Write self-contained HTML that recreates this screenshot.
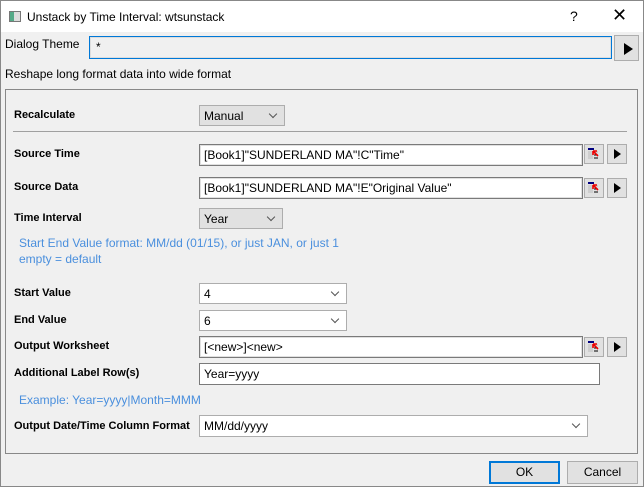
<!DOCTYPE html><html><head><meta charset="utf-8"><style>
*{box-sizing:border-box}
body{margin:0;width:644px;height:487px;background:#f0f0f0;font-family:"Liberation Sans",sans-serif;font-size:12px;color:#000;position:relative;overflow:hidden;border:1px solid #888}
.a{position:absolute;white-space:nowrap}
.b{font-weight:bold;font-size:11px}
.in{position:absolute;background:#fff;border:1px solid #7a7a7a;box-shadow:inset 0 0 0 1px #e0e0e0;padding:3px 4px;font-size:12px}
.cb{position:absolute;background:#fff;border:1px solid #adadad;padding:3px 4px;font-size:12px}
.cb.g{background:#e1e1e1}
.cb:after{content:"";position:absolute;right:8px;top:5px;width:5px;height:5px;border-right:1px solid #555;border-bottom:1px solid #555;transform:rotate(45deg)}
.cb.n:after{display:none}
.btn{position:absolute;background:#e1e1e1;border:1px solid #adadad}
.tri{position:absolute;left:7px;top:5px;width:0;height:0;border-left:7px solid #000;border-top:5px solid transparent;border-bottom:5px solid transparent}
.blue{color:#4a8fdd}
</style></head><body>
<div class="a" style="left:0;top:0;width:642px;height:31px;background:#fff"></div>
<div class="a" style="left:8px;top:10px;width:12px;height:11px;border:1px solid #777;background:linear-gradient(90deg,#5a8 0 40%,#ddd 40%)"></div>
<div class="a" style="left:26px;top:9px;font-size:12px">Unstack by Time Interval: wtsunstack</div>
<div class="a" style="left:569px;top:7px;font-size:14px">?</div>
<div class="a" style="left:611px;top:4px;font-size:18px;font-weight:300">✕</div>
<div class="a" style="left:4px;top:36px">Dialog Theme</div>
<div class="a" style="left:88px;top:35px;width:523px;height:23px;border:1px solid #0078d7;background:#f0f0f0;box-shadow:inset 0 0 0 1px #ddd;padding:3px 6px">*</div>
<div class="btn" style="left:613px;top:34px;width:25px;height:26px"><div class="tri" style="left:9px;top:7px;border-left-width:9px;border-top-width:6px;border-bottom-width:6px"></div></div>
<div class="a" style="left:4px;top:66px">Reshape long format data into wide format</div>
<div class="a" style="left:4px;top:88px;width:633px;height:365px;border:1px solid #888"></div>
<div class="a b" style="left:13px;top:108px">Recalculate</div>
<div class="cb g" style="left:198px;top:104px;width:86px;height:21px">Manual</div>
<div class="a" style="left:12px;top:130px;width:614px;height:1px;background:#a0a0a0"></div>
<div class="a b" style="left:13px;top:147px">Source Time</div>
<div class="in" style="left:198px;top:143px;width:384px;height:22px">[Book1]"SUNDERLAND MA"!C"Time"</div>
<div class="a b" style="left:13px;top:180px">Source Data</div>
<div class="in" style="left:198px;top:176px;width:384px;height:22px">[Book1]"SUNDERLAND MA"!E"Original Value"</div>
<div class="a b" style="left:13px;top:211px">Time Interval</div>
<div class="cb g" style="left:198px;top:207px;width:84px;height:21px">Year</div>
<div class="a blue" style="left:18px;top:235px">Start End Value format: MM/dd (01/15), or just JAN, or just 1</div>
<div class="a blue" style="left:18px;top:251px">empty = default</div>
<div class="a b" style="left:13px;top:286px">Start Value</div>
<div class="cb" style="left:198px;top:282px;width:148px;height:21px">4</div>
<div class="a b" style="left:13px;top:313px">End Value</div>
<div class="cb" style="left:198px;top:309px;width:148px;height:21px">6</div>
<div class="a b" style="left:13px;top:339px">Output Worksheet</div>
<div class="in" style="left:198px;top:335px;width:384px;height:22px">[&lt;new&gt;]&lt;new&gt;</div>
<div class="a b" style="left:13px;top:366px">Additional Label Row(s)</div>
<div class="cb n" style="left:198px;top:362px;width:401px;height:22px;border-color:#7a7a7a">Year=yyyy</div>
<div class="a blue" style="left:18px;top:392px">Example: Year=yyyy|Month=MMM</div>
<div class="a b" style="left:13px;top:419px">Output Date/Time Column Format</div>
<div class="cb" style="left:198px;top:414px;width:389px;height:22px">MM/dd/yyyy</div>
<div class="btn" style="left:583px;top:143px;width:20px;height:20px"><svg width="18" height="18"><rect x="3" y="3" width="6" height="2" fill="#000080"/><path d="M3 7h10M3 9h6M3 11h5M3 13h5" stroke="#bbb"/><path d="M9 10h4M9 13h4" stroke="#000"/><path d="M8 6l5 5M8 6v4M8 6h4" stroke="#e00" stroke-width="1.6"/></svg></div>
<div class="btn" style="left:606px;top:143px;width:20px;height:20px"><div class="tri" style="left:6px;top:4px"></div></div>
<div class="btn" style="left:583px;top:177px;width:20px;height:20px"><svg width="18" height="18"><rect x="3" y="3" width="6" height="2" fill="#000080"/><path d="M3 7h10M3 9h6M3 11h5M3 13h5" stroke="#bbb"/><path d="M9 10h4M9 13h4" stroke="#000"/><path d="M8 6l5 5M8 6v4M8 6h4" stroke="#e00" stroke-width="1.6"/></svg></div>
<div class="btn" style="left:606px;top:177px;width:20px;height:20px"><div class="tri" style="left:6px;top:4px"></div></div>
<div class="btn" style="left:583px;top:336px;width:20px;height:20px"><svg width="18" height="18"><rect x="3" y="3" width="6" height="2" fill="#000080"/><path d="M3 7h10M3 9h6M3 11h5M3 13h5" stroke="#bbb"/><path d="M9 10h4M9 13h4" stroke="#000"/><path d="M8 6l5 5M8 6v4M8 6h4" stroke="#e00" stroke-width="1.6"/></svg></div>
<div class="btn" style="left:606px;top:336px;width:20px;height:20px"><div class="tri" style="left:6px;top:4px"></div></div>
<div class="btn" style="left:488px;top:460px;width:71px;height:23px;border:2px solid #0078d7;text-align:center;line-height:19px">OK</div>
<div class="btn" style="left:566px;top:460px;width:71px;height:23px;text-align:center;line-height:21px">Cancel</div>
</body></html>
